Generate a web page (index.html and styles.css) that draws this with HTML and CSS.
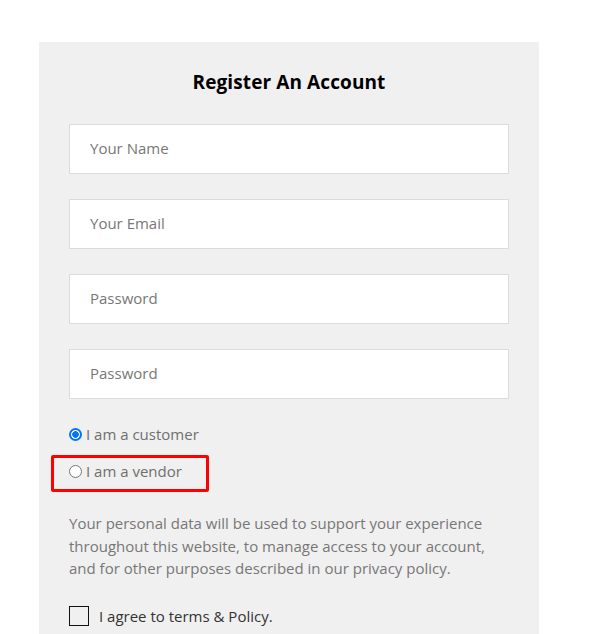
FILE: index.html
```html
<!DOCTYPE html>
<html>
<head>
<meta charset="utf-8">
<link rel="stylesheet" href="styles.css">
</head>
<body>
<div class="panel">
  <h2 class="title">Register An Account</h2>
  <form class="form">
    <input class="field" type="text" placeholder="Your Name">
    <input class="field" type="email" placeholder="Your Email">
    <input class="field" type="password" placeholder="Password">
    <input class="field" type="password" placeholder="Password">
    <div class="roles">
      <label class="role"><span class="radio checked"></span>I am a customer</label>
      <div class="highlight">
        <label class="role"><span class="radio"></span>I am a vendor</label>
      </div>
    </div>
    <p class="note">Your personal data will be used to support your experience throughout this website, to manage access to your account, and for other purposes described in our privacy policy.</p>
    <label class="agree"><span class="box"></span>I agree to terms &amp; Policy.</label>
  </form>
</div>
</body>
</html>
```
FILE: styles.css
```css
html, body {
  margin: 0;
  padding: 0;
  background: #fff;
  height: 100%;
  overflow: hidden;
}
body {
  font-family: "Open Sans", "DejaVu Sans", sans-serif;
}
.panel {
  box-sizing: border-box;
  width: 500px;
  margin: 42px 0 0 39px;
  min-height: 600px;
  background: #f0f0f0;
  padding: 29px 30px 0;
}
.title {
  margin: 0;
  font-size: 19px;
  line-height: 22px;
  font-weight: 700;
  text-align: center;
  color: #000;
  letter-spacing: 0.1px;
}
.form {
  display: flex;
  flex-direction: column;
  margin-top: 31px;
}
.field {
  box-sizing: border-box;
  height: 50px;
  width: 440px;
  margin: 0 0 25px;
  padding: 0 20px 2px;
  border: 1px solid #dcdcdc;
  background: #fff;
  font-family: inherit;
  font-size: 15px;
  color: #333;
  outline: none;
}
.field::placeholder {
  color: #777;
}
.roles {
  display: flex;
  flex-direction: column;
}
.role {
  display: flex;
  align-items: center;
  height: 20px;
  font-size: 15px;
  color: #6f6f6f;
}
.radio {
  box-sizing: border-box;
  width: 13px;
  height: 13px;
  border-radius: 50%;
  border: 1px solid #767676;
  background: #fff;
  margin-right: 4px;
}
.radio.checked {
  border: 2px solid #0075ff;
  background: radial-gradient(circle, #0075ff 0 3px, #fff 3.6px);
}
.highlight {
  box-sizing: border-box;
  width: 158px;
  height: 37px;
  margin: 11px 0 0 -18px;
  padding: 3px 0 0 15px;
  border: 3px solid #f00;
  border-radius: 2px;
}
.note {
  margin: 20px 0 0;
  font-size: 15px;
  line-height: 22.5px;
  color: #777;
}
.agree {
  display: flex;
  align-items: center;
  margin-top: 26px;
  font-size: 15px;
  color: #333;
}
.box {
  box-sizing: border-box;
  width: 20px;
  height: 20px;
  border: 1.5px solid #111;
  margin-right: 10px;
}
```
